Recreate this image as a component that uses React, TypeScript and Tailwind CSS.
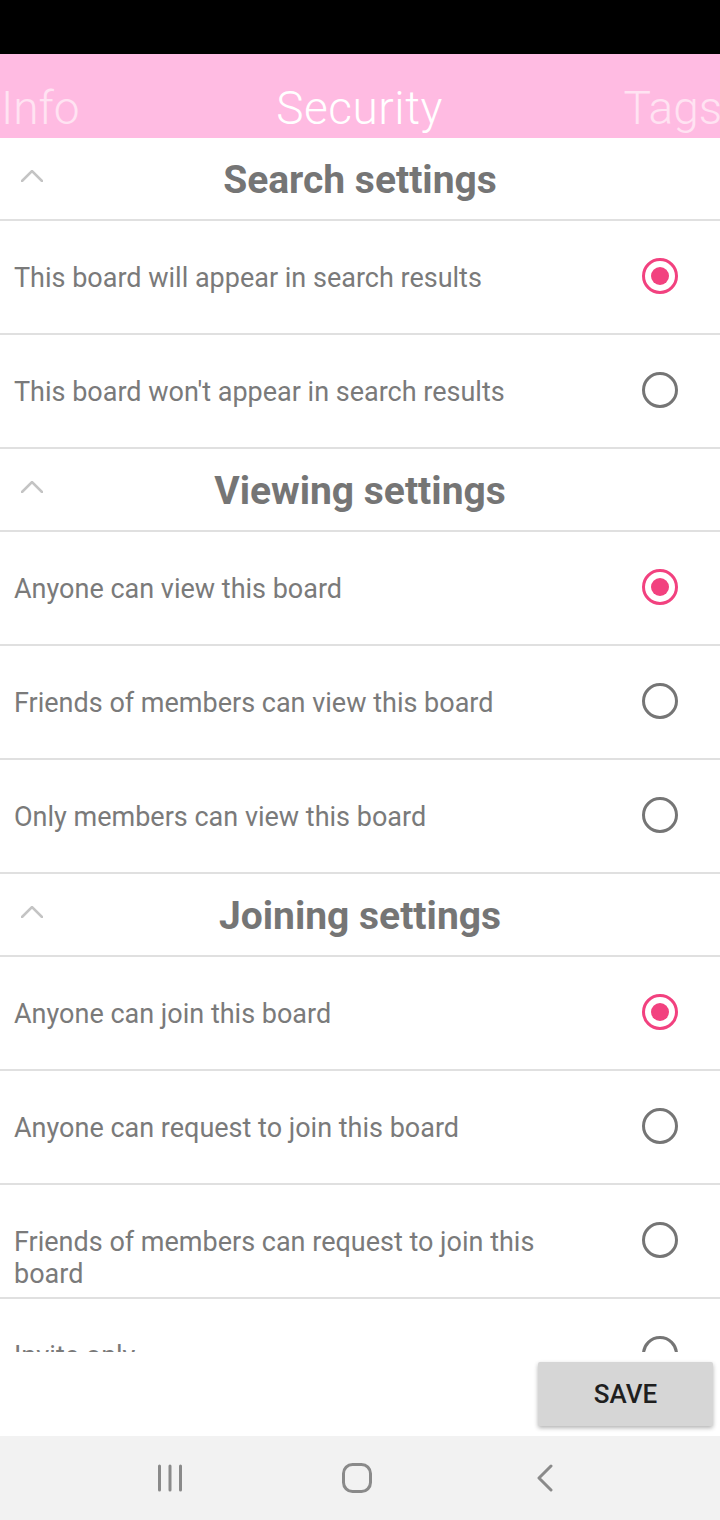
const SECTIONS = [
  {
    title: 'Search settings',
    options: [
      { label: 'This board will appear in search results', checked: true },
      { label: "This board won't appear in search results", checked: false },
    ],
  },
  {
    title: 'Viewing settings',
    options: [
      { label: 'Anyone can view this board', checked: true },
      { label: 'Friends of members can view this board', checked: false },
      { label: 'Only members can view this board', checked: false },
    ],
  },
  {
    title: 'Joining settings',
    options: [
      { label: 'Anyone can join this board', checked: true },
      { label: 'Anyone can request to join this board', checked: false },
      { label: 'Friends of members can request to join this board', checked: false },
      { label: 'Invite only', checked: false },
    ],
  },
]

export default function App() {
  return (
    <div className="flex h-[1520px] w-[720px] flex-col overflow-hidden bg-white font-['Roboto',sans-serif]">
      {/* status bar */}
      <div className="h-[54px] shrink-0 bg-black" />

      {/* tabs */}
      <div className="flex h-[84px] shrink-0 items-center justify-between overflow-hidden whitespace-nowrap bg-[#ffbbe2] pl-[1px] pt-[24px] text-[46px] font-light leading-none">
        <span className="text-[#ffe3f2]">Info</span>
        <span className="ml-[16px] tracking-[0.5px] text-white">Security</span>
        <span className="-mr-[2px] text-[#ffe3f2]">Tags</span>
      </div>

      {/* settings list */}
      <div className="h-[1214px] shrink-0 overflow-hidden">
        {SECTIONS.map((section) => (
          <div key={section.title}>
            <SectionHeader title={section.title} />
            {section.options.map((option) => (
              <OptionRow key={option.label} label={option.label} checked={option.checked} />
            ))}
          </div>
        ))}
      </div>

      {/* save */}
      <div className="flex h-[84px] shrink-0 items-start justify-end pr-[7px] pt-[10px]">
        <button className="h-[64px] w-[175px] rounded-[2px] bg-[#d6d6d6] text-[26px] font-medium text-[#1f1f1f] shadow-[0_2px_4px_rgba(0,0,0,0.3)]">
          SAVE
        </button>
      </div>

      {/* nav bar */}
      <div className="flex h-[84px] shrink-0 items-center bg-[#f2f2f2] pl-[156px]">
        <svg width="28" height="28" viewBox="0 0 28 28" fill="none" stroke="#8a8a8a" strokeWidth="3" strokeLinecap="round">
          <path d="M3.5 2v24M14 2v24M24.5 2v24" />
        </svg>
        <svg className="ml-[157px]" width="32" height="32" viewBox="0 0 32 32" fill="none" stroke="#8a8a8a" strokeWidth="3">
          <rect x="2.5" y="2.5" width="27" height="27" rx="9" />
        </svg>
        <svg className="ml-[162px]" width="20" height="28" viewBox="0 0 20 28" fill="none" stroke="#8a8a8a" strokeWidth="3" strokeLinecap="round" strokeLinejoin="round">
          <path d="M16 2L4 14l12 12" />
        </svg>
      </div>
    </div>
  )
}

function SectionHeader({ title }: { title: string }) {
  return (
    <div className="grid h-[83px] grid-cols-[60px_1fr_60px] items-center border-b-2 border-[#e0e0e0]">
      <svg className="mb-[6px] ml-[21px]" width="22" height="12" viewBox="0 0 22 12" fill="none" stroke="#c4c4c4" strokeWidth="2.5" strokeLinecap="round">
        <path d="M1 11L11 1l10 10" />
      </svg>
      <h2 className="pt-[4px] text-center text-[39px] font-bold leading-none text-[#757575]">{title}</h2>
      <span />
    </div>
  )
}

interface OptionRowProps {
  label: string
  checked: boolean
}

function OptionRow({ label, checked }: OptionRowProps) {
  return (
    <div className="flex h-[114px] items-center border-b-2 border-[#e0e0e0] pb-[2px] pl-[14px] pr-[42px]">
      <div className="mr-[52px] h-[32px] flex-1 pt-[2px] text-[27px] leading-[32px] text-[#7a7a7a]">{label}</div>
      {checked ? (
        <span className="grid h-[36px] w-[36px] shrink-0 place-items-center rounded-full border-[3px] border-[#f2417f]">
          <span className="h-[18px] w-[18px] rounded-full bg-[#f2417f]" />
        </span>
      ) : (
        <span className="h-[36px] w-[36px] shrink-0 rounded-full border-[3px] border-[#757575]" />
      )}
    </div>
  )
}
